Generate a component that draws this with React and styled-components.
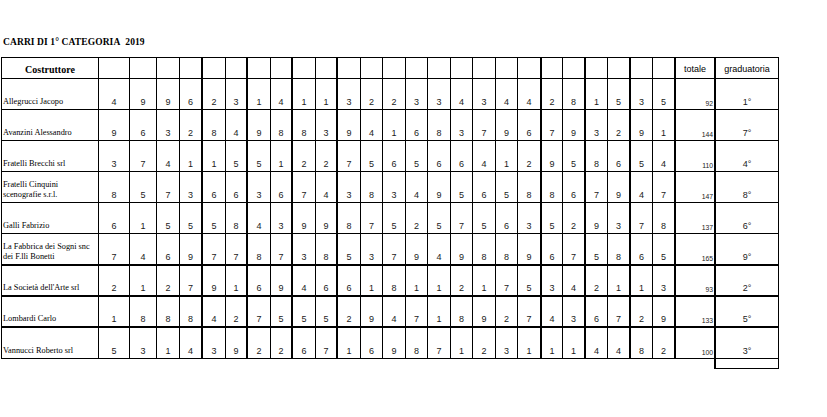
import React from 'react';
import styled, { createGlobalStyle } from 'styled-components';

// --- Global ---

const GlobalStyle = createGlobalStyle`
  html, body {
    margin: 0;
    padding: 0;
    background: #ffffff;
  }
`;

// --- Styled Components ---

const Page = styled.div`
  width: 827px;
  height: 417px;
  padding: 36px 0 0 1px;
  box-sizing: border-box;
  background: #ffffff;
  color: #000;
`;

const Title = styled.div`
  font-family: 'Liberation Serif', 'Times New Roman', serif;
  font-weight: bold;
  font-size: 9.5px;
  line-height: 12px;
  height: 12px;
  margin: 0 0 9px 2px;
  letter-spacing: 0.1px;
`;

const Sheet = styled.div`
  display: grid;
  grid-template-columns: ${({ $cols }) => $cols.map((w) => `${w}px`).join(' ')};
  grid-template-rows: ${({ $rows }) => $rows.map((h) => `${h}px`).join(' ')};
  width: max-content;
`;

const Cell = styled.div`
  box-sizing: border-box;
  display: flex;
  align-items: flex-end;
  border-right: ${({ $thickRight }) => ($thickRight ? '2px' : '1px')} solid #000;
  border-bottom: ${({ $thickBottom }) => ($thickBottom ? '2px' : '1px')} solid #000;
  border-top: ${({ $top }) => ($top ? '1px solid #000' : 'none')};
  overflow: hidden;
`;

const HeadCell = styled(Cell)`
  justify-content: center;
  padding-bottom: 3px;
  border-left: ${({ $serif }) => ($serif ? '1px solid #000' : 'none')};
  font-family: ${({ $serif }) =>
    $serif ? "'Liberation Serif', 'Times New Roman', serif" : "'Liberation Sans', Arial, sans-serif"};
  font-weight: ${({ $serif }) => ($serif ? 'bold' : 'normal')};
  font-size: ${({ $serif }) => ($serif ? '10px' : '9px')};
  line-height: 11px;
`;

const NameCell = styled(Cell)`
  padding: 0 0 2px 1px;
  border-left: 1px solid #000;
  font-family: 'Liberation Serif', 'Times New Roman', serif;
  font-size: 8.3px;
  line-height: 10px;
  white-space: pre-line;
`;

const ScoreCell = styled(Cell)`
  justify-content: center;
  padding-bottom: 2px;
  font-family: 'Liberation Sans', Arial, sans-serif;
  font-size: 9px;
  line-height: 10px;
  color: #1a1a1a;
`;

const TotalCell = styled(Cell)`
  justify-content: flex-end;
  padding: 0 1px 1px 0;
  font-family: 'Liberation Sans', Arial, sans-serif;
  font-size: 6.8px;
  line-height: 8px;
  color: #1a1a1a;
`;

const RankCell = styled(Cell)`
  justify-content: center;
  padding-bottom: 2px;
  font-family: 'Liberation Sans', Arial, sans-serif;
  font-size: 9px;
  line-height: 10px;
  color: #1a1a1a;
`;

const TailCell = styled.div`
  grid-column: ${({ $col }) => $col};
  border-left: 2px solid #000;
  border-right: 1px solid #000;
  border-bottom: 1px solid #000;
  margin-left: -2px;
`;

// --- Data ---

const columnWidths = [
  98, 31, 27, 23, 23, 23, 22, 23, 22, 23, 22, 23, 22, 23, 22, 23, 22, 23, 22, 24, 21, 23, 22, 23, 22, 23,
  40, 63,
];

// score columns (1-based) followed by a thick rule
const thickAfter = [4, 6, 8, 10, 19, 21, 23, 25];

const entries = [
  { name: 'Allegrucci Jacopo', scores: '4996231411322334344281535', total: 92, rank: '1°' },
  { name: 'Avanzini Alessandro', scores: '9632849883941683796793291', total: 144, rank: '7°' },
  { name: 'Fratelli Brecchi srl', scores: '3741155122756566412958654', total: 110, rank: '4°' },
  { name: 'Fratelli Cinquini\nscenografie s.r.l.', scores: '8573663674383495658867947', total: 147, rank: '8°' },
  { name: 'Galli Fabrizio', scores: '6155584399875257563529378', total: 137, rank: '6°' },
  { name: 'La Fabbrica dei Sogni snc\ndei F.lli Bonetti', scores: '7469778738537949889675865', total: 165, rank: '9°', thick: true },
  { name: "La Società dell'Arte srl", scores: '2127916946618112175342113', total: 93, rank: '2°', thick: true },
  { name: 'Lombardi Carlo', scores: '1888427555294718927436729', total: 133, rank: '5°', thick: true },
  { name: 'Vannucci Roberto srl', scores: '5314392267169871231114482', total: 100, rank: '3°' },
];

const rowHeights = [22, 31, 31, 31, 31, 31, 32, 31, 31, 31, 10];

// --- Component ---

const App = () => {
  const scoreCols = columnWidths.slice(1, 26);

  return (
    <>
      <GlobalStyle />
      <Page>
        <Title>CARRI DI 1° CATEGORIA&nbsp;&nbsp;2019</Title>
        <Sheet $cols={columnWidths} $rows={rowHeights}>
          <HeadCell $serif $top>Costruttore</HeadCell>
          {scoreCols.map((_, i) => (
            <HeadCell key={`h${i}`} $top $thickRight={thickAfter.includes(i + 1)} />
          ))}
          <HeadCell $top $thickRight>totale</HeadCell>
          <HeadCell $top>graduatoria</HeadCell>

          {entries.map((row) => (
            <React.Fragment key={row.name}>
              <NameCell $thickBottom={row.thick}>{row.name}</NameCell>
              {row.scores.split('').map((s, i) => (
                <ScoreCell
                  key={i}
                  $thickRight={thickAfter.includes(i + 1)}
                  $thickBottom={row.thick}
                >
                  {s}
                </ScoreCell>
              ))}
              <TotalCell $thickRight $thickBottom={row.thick}>
                {row.total}
              </TotalCell>
              <RankCell $thickBottom={row.thick}>{row.rank}</RankCell>
            </React.Fragment>
          ))}

          <TailCell $col={28} />
        </Sheet>
      </Page>
    </>
  );
};

export default App;
